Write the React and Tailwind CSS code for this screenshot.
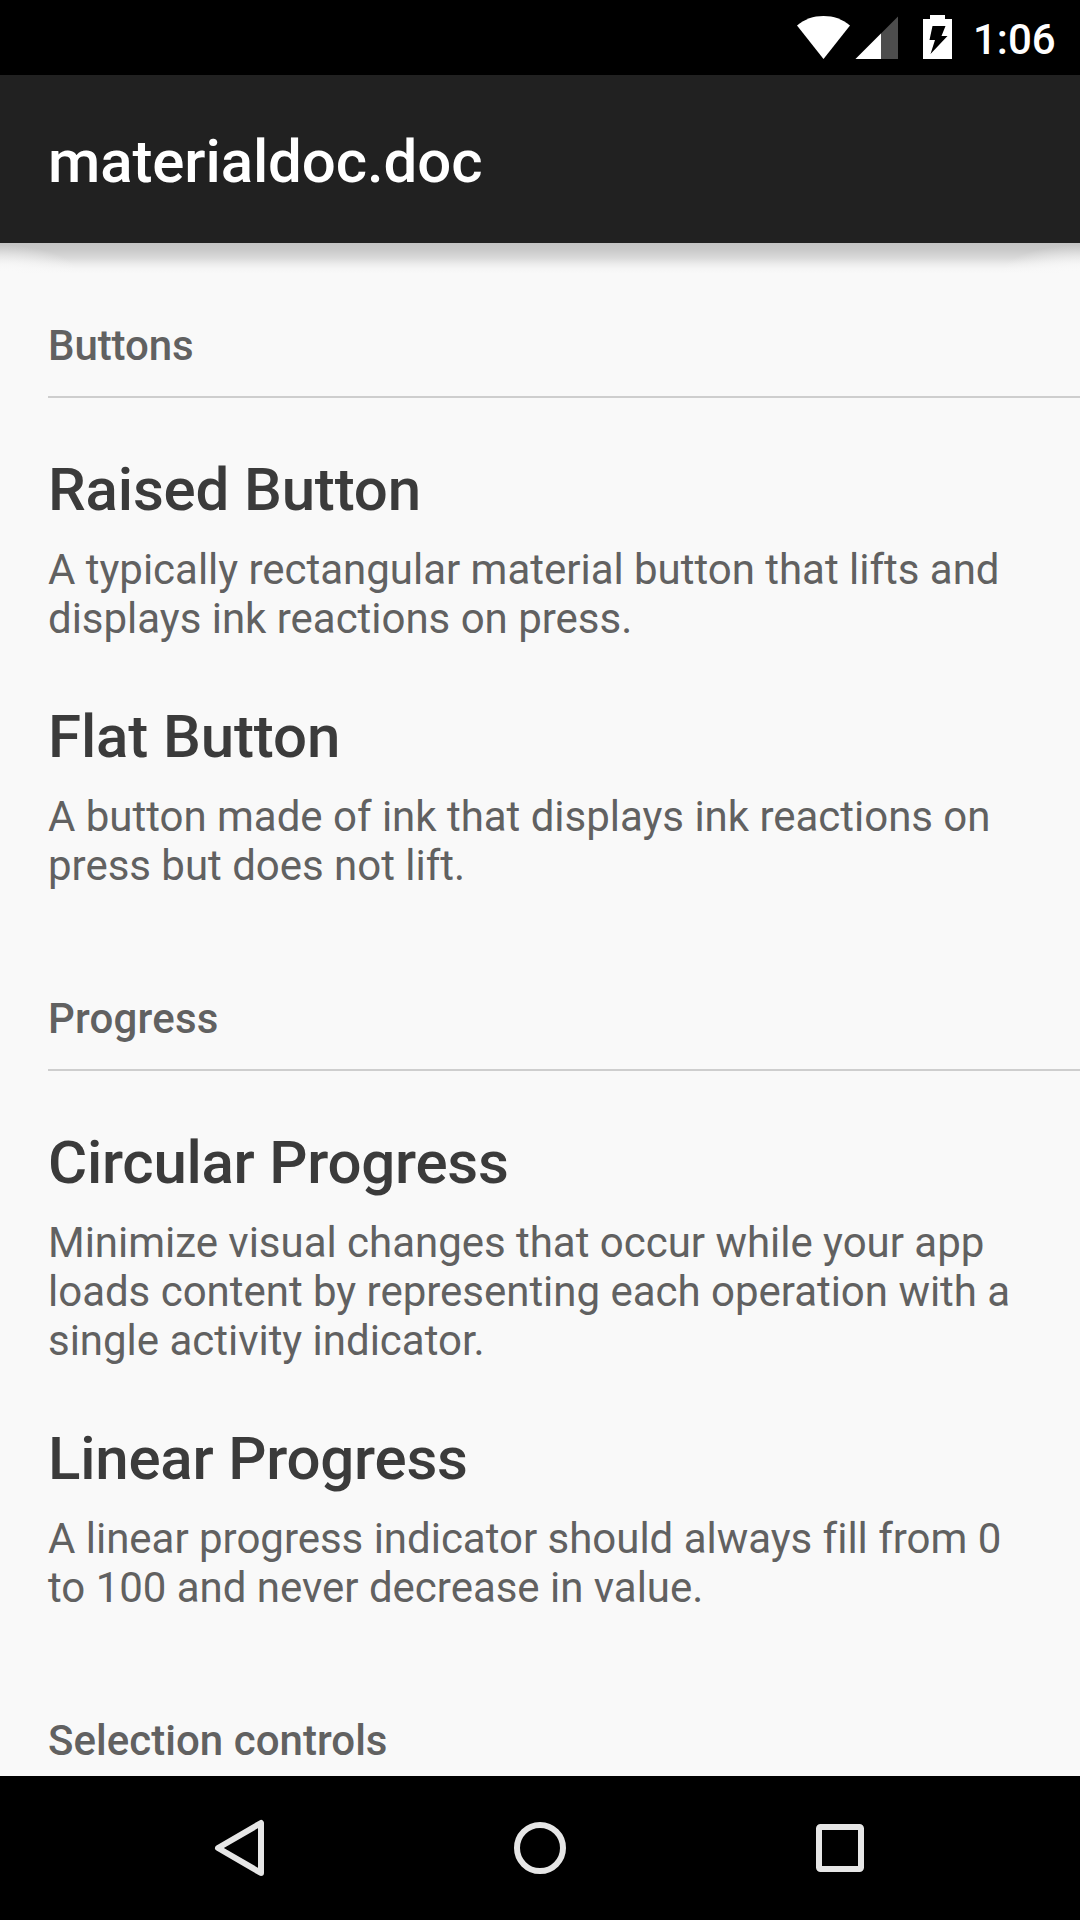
const groups = [
  { title: "Buttons", tracking: "tracking-[-0.1px]", items: [
    { name: "Raised Button", tracking: "tracking-[-0.17px]", lines: ["A typically rectangular material button that lifts and", "displays ink reactions on press."] },
    { name: "Flat Button", tracking: "tracking-[-0.12px]", lines: ["A button made of ink that displays ink reactions on", "press but does not lift."] },
  ] },
  { title: "Progress", tracking: "tracking-[0.2px]", items: [
    { name: "Circular Progress", tracking: "tracking-[-0.26px]", lines: ["Minimize visual changes that occur while your app", "loads content by representing each operation with a", "single activity indicator."] },
    { name: "Linear Progress", tracking: "tracking-[-0.22px]", lines: ["A linear progress indicator should always fill from 0", "to 100 and never decrease in value."] },
  ] },
  { title: "Selection controls", tracking: "tracking-[0.03px]", items: [] },
];

function StatusBar() {
  return (
    <div className="flex h-[75px] shrink-0 items-start bg-black pl-[796px] text-white">
      <svg className="mt-[15px] h-[45px] w-[160px] shrink-0" viewBox="0 0 160 45">
        <path d="M1 10.500C9 4 17 1 27.500 1S46 4 54 10.500L27.500 44Z" fill="#fff" />
        <path d="M102 1.500V44H59.500Z" fill="#4d4d4d" />
        <path d="M85 18.500V44H59.500Z" fill="#fff" />
        <path d="M134 4V0h15v4h7v40h-29V4Z" fill="#fff" />
        <path d="M136.500 11H149.500L145.500 21H151.500L134.500 39L139 25H133.500Z" fill="#000" />
      </svg>
      <div className="ml-[17px] mt-[15px] text-[42px] font-medium leading-[49px]">1:06</div>
    </div>
  );
}

function NavBar() {
  return (
    <div className="flex h-[144px] shrink-0 items-center justify-center bg-black">
      <svg className="h-[144px] w-[1080px]" viewBox="0 0 1080 144" fill="none" stroke="#e6e6e6" strokeWidth="6">
        <path d="M261 47V97L218 72Z" strokeLinejoin="round" />
        <circle cx="540" cy="72" r="23" />
        <rect x="819" y="51" width="42" height="42" rx="1.500" />
      </svg>
    </div>
  );
}

export default function App() {
  return (
    <div className="flex h-[1920px] w-[1080px] flex-col overflow-hidden bg-[#f9f9f9] font-['Roboto',sans-serif]">
      <StatusBar />
      <header className="relative z-10 flex h-[168px] shrink-0 items-center bg-[#212121] pl-12 text-[60px] font-medium text-white">
        <h1 className="mt-[5px] tracking-[-0.1px]">materialdoc.doc</h1>
        <div className="absolute left-0 top-full h-[32px] w-full bg-[radial-gradient(ellipse_80px_30px_at_0%_100%,#f9f9f9f0_20%,#f9f9f980_60%,#f9f9f900_100%),radial-gradient(ellipse_80px_30px_at_100%_100%,#f9f9f9f0_20%,#f9f9f980_60%,#f9f9f900_100%),linear-gradient(to_bottom,#c4c4c4_0px,#cacaca_7px,#dadada_15px,#ececec_21px,#f6f6f6_26px,#f9f9f9_31px)]" />
      </header>
      <main className="min-h-0 flex-1 overflow-hidden pl-12">
        {groups.map((g) => (
          <section key={g.title}>
            <h2 className={`h-[155px] border-b-2 border-[#cecece] pt-[78px] text-[42px] font-medium leading-[49px] text-[#616161] ${g.tracking}`}>{g.title}</h2>
            <div className="pt-[24px]">
              {g.items.map((item) => (
                <article key={item.name} className="pb-[26px] pt-[33px]">
                  <h3 className={`h-[90px] text-[60px] font-medium leading-[70px] text-[#3b3b3b] ${item.tracking}`}>{item.name}</h3>
                  {item.lines.map((l) => (
                    <p key={l} className="whitespace-nowrap text-[42px] leading-[49px] tracking-[-0.02px] text-[#616161]">{l}</p>
                  ))}
                </article>
              ))}
            </div>
          </section>
        ))}
      </main>
      <NavBar />
    </div>
  );
}
